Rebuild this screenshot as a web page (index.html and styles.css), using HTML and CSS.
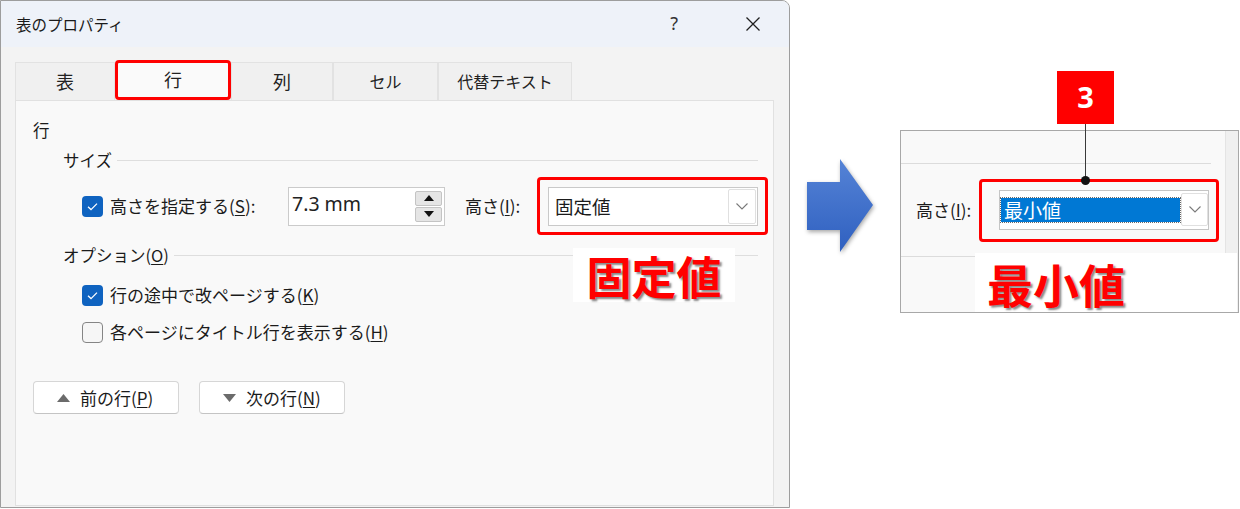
FILE: index.html
```html
<!DOCTYPE html>
<html lang="ja">
<head>
<meta charset="utf-8">
<title>表のプロパティ</title>
<link rel="stylesheet" href="styles.css">
</head>
<body>
<div class="page">
  <div class="dialog">
    <div class="titlebar">
      <span class="title">表のプロパティ</span>
      <span class="help">?</span>
      <span class="close"><svg width="16" height="16" viewBox="0 0 16 16"><path d="M1.5 1.5 L14.5 14.5 M14.5 1.5 L1.5 14.5" stroke="#1f1f1f" stroke-width="1.3" fill="none"/></svg></span>
    </div>
    <div class="body">
      <div class="tabs">
        <div class="tab t1">表</div>
        <div class="tab t2 active">行</div>
        <div class="tab t3">列</div>
        <div class="tab t4">セル</div>
        <div class="tab t5">代替テキスト</div>
      </div>
      <div class="panel">
        <div class="sec">行</div>
        <div class="group"><span class="gname">サイズ</span><i class="rule"></i></div>
        <div class="size-row">
          <span class="cb on"><svg width="21" height="21" viewBox="0 0 21 21"><path d="M6 10.8 L9 13.6 L15 7.6" stroke="#fff" stroke-width="1.3" fill="none"/></svg></span>
          <span class="lbl size-lbl">高さを指定する(<u>S</u>):</span>
          <div class="spin">
            <span class="spin-val">7.3 mm</span>
            <div class="spin-btns">
              <span class="sb"><svg width="10" height="6" viewBox="0 0 10 6"><path d="M0 6 L5 0 L10 6 Z" fill="#111"/></svg></span>
              <span class="sb"><svg width="10" height="6" viewBox="0 0 10 6"><path d="M0 0 L10 0 L5 6 Z" fill="#111"/></svg></span>
            </div>
          </div>
          <span class="lbl h-lbl">高さ(<u>I</u>):</span>
          <div class="redbox">
            <div class="select">
              <span class="sel-val">固定値</span>
              <span class="dd"><svg width="12" height="7" viewBox="0 0 12 7"><path d="M0.5 0.5 L6 6 L11.5 0.5" stroke="#7a7a7a" stroke-width="1.1" fill="none"/></svg></span>
            </div>
          </div>
        </div>
        <div class="group g2"><span class="gname">オプション(<u>O</u>)</span><i class="rule"></i></div>
        <div class="opt o1">
          <span class="cb on"><svg width="21" height="21" viewBox="0 0 21 21"><path d="M6 10.8 L9 13.6 L15 7.6" stroke="#fff" stroke-width="1.3" fill="none"/></svg></span>
          <span class="lbl">行の途中で改ページする(<u>K</u>)</span>
        </div>
        <div class="opt o2">
          <span class="cb off"></span>
          <span class="lbl">各ページにタイトル行を表示する(<u>H</u>)</span>
        </div>
        <div class="navs">
          <button class="nav"><svg width="13" height="8" viewBox="0 0 13 8"><path d="M0 8 L6.5 0 L13 8 Z" fill="#6b6b6b"/></svg><span>前の行(<u>P</u>)</span></button>
          <button class="nav"><svg width="13" height="8" viewBox="0 0 13 8"><path d="M0 0 L13 0 L6.5 8 Z" fill="#6b6b6b"/></svg><span>次の行(<u>N</u>)</span></button>
        </div>
        <div class="note n1">固定値</div>
      </div>
    </div>
  </div>
  <div class="right">
    <svg class="arrow" width="80" height="100" viewBox="0 0 80 100">
      <defs>
        <linearGradient id="ag" x1="0" y1="0" x2="0" y2="1">
          <stop offset="0" stop-color="#5583d6"/>
          <stop offset="1" stop-color="#2f60c0"/>
        </linearGradient>
      </defs>
      <path d="M7 27 L40 27 L40 4 L73 50 L40 97 L40 75 L7 75 Z" fill="url(#ag)"/>
    </svg>
    <div class="zoomwrap">
      <div class="badge">3</div>
      <div class="zoombox">
        <div class="zmain">
          <div class="ztop"></div>
          <div class="zrow">
            <span class="zlbl">高さ(<u>I</u>):</span>
            <div class="zred">
              <div class="zsel">
                <span class="zhl">最小値</span>
                <span class="zdd"><svg width="12" height="7" viewBox="0 0 12 7"><path d="M0.5 0.5 L6 6 L11.5 0.5" stroke="#7a7a7a" stroke-width="1.1" fill="none"/></svg></span>
              </div>
            </div>
          </div>
          <div class="zbottom"></div>
        </div>
        <div class="zstrip"></div>
        <div class="note n2">最小値</div>
      </div>
      <i class="leader"></i>
      <i class="dot"></i>
    </div>
  </div>
</div>
</body>
</html>
```

FILE: styles.css
```css
* { box-sizing: border-box; }

body {
  margin: 0;
  width: 1240px;
  height: 509px;
  overflow: hidden;
  background: #ffffff;
  font-family: "Noto Sans CJK JP", "Noto Sans", sans-serif;
  color: #1b1b1b;
  line-height: 1.2;
}

u { text-decoration-thickness: 1px; text-underline-offset: 2px; }

.page {
  display: flex;
  height: 509px;
}

/* ---------- dialog ---------- */
.dialog {
  width: 790px;
  height: 508px;
  flex: none;
  border: 1px solid #9d9d9d;
  border-top-right-radius: 8px;
  background: #f3f3f3;
  display: flex;
  flex-direction: column;
  overflow: hidden;
}

.titlebar {
  height: 46px;
  flex: none;
  background: #eef2f9;
  display: flex;
  align-items: center;
  padding-left: 15px;
}

.title { font-size: 15.5px; color: #1a1a1a; }

.help {
  margin-left: auto;
  font-family: "Noto Sans", sans-serif;
  font-size: 18px;
  color: #333;
  margin-right: 52px;
}

.close {
  width: 46px;
  display: flex;
  justify-content: center;
  margin-right: 13px;
}

.body {
  flex: 1;
  display: flex;
  flex-direction: column;
  padding: 13px 14px 1px 14px;
}

.tabs {
  display: flex;
  align-items: flex-end;
  height: 40px;
  flex: none;
}

.tab {
  height: 38px;
  flex: none;
  background: #f0f0f0;
  border: 1px solid #e2e2e2;
  border-bottom: none;
  display: flex;
  align-items: center;
  justify-content: center;
  font-size: 17px;
  color: #222;
}
.t1 { width: 100px; font-size: 18px; }
.t2 { width: 116px; }
.t3 { width: 102px; font-size: 18px; }
.t4 { width: 105px; font-size: 16px; }
.t5 { width: 134px; font-size: 16px; }

.tab.active {
  height: 40px;
  background: #fafafa;
  border: 3px solid #ff0000;
  border-radius: 4px;
  font-size: 18px;
}

.panel {
  position: relative;
  flex: 1;
  width: 759px;
  background: #f9f9f9;
  border: 1px solid #e1e1e1;
  padding: 19px 15px 0 17px;
}

.sec { font-size: 16.5px; height: 20px; line-height: 20px; }

.group {
  display: flex;
  align-items: center;
  margin: 10px 0 0 30px;
  height: 20px;
  font-size: 16.5px;
}
.gname { line-height: 20px; }
.rule {
  flex: 1;
  height: 1px;
  background: #dedede;
  margin-left: 5px;
}
.g2 { margin-top: 10px; }

.lbl { font-size: 17px; color: #1b1b1b; flex: none; }

.size-row {
  display: flex;
  align-items: center;
  margin: 7px 0 0 49px;
  height: 58px;
}

.cb {
  width: 21px;
  height: 21px;
  border-radius: 4px;
  flex: none;
  display: block;
}
.cb.on { background: #0f63c0; }
.cb.on svg { display: block; }
.cb.off { background: #f6f6f6; border: 1px solid #858585; }

.size-lbl { margin-left: 7px; width: 153px; }

.spin {
  margin-left: 25px;
  flex: none;
  width: 157px;
  height: 39px;
  background: #fff;
  border: 1px solid #cbcbcb;
  display: flex;
  align-items: center;
}
.spin-val {
  font-family: "Noto Sans", sans-serif;
  font-size: 19.5px;
  padding-left: 3px;
  flex: 1;
  color: #222;
  position: relative;
  top: -2px;
}
.spin-btns {
  display: flex;
  flex-direction: column;
  gap: 1px;
  margin-right: 2px;
}
.sb {
  width: 27px;
  height: 15px;
  background: #e5e5e5;
  border: 1px solid #c4c4c4;
  border-radius: 2px;
  display: flex;
  align-items: center;
  justify-content: center;
}

.h-lbl { margin-left: 20px; width: 63px; }

.redbox {
  flex: none;
  margin-left: 9px;
  border: 3px solid #ff0000;
  border-radius: 4px;
  padding: 7px 7px 6px 8px;
}
.select {
  width: 210px;
  height: 39px;
  background: #fff;
  border: 1px solid #c9c9c9;
  display: flex;
  align-items: center;
}
.sel-val { flex: 1; font-size: 18.5px; padding-left: 6px; color: #1b1b1b; }
.dd {
  width: 28px;
  height: 35px;
  margin-right: 1px;
  border: 1px solid #e0e0e0;
  border-radius: 2px;
  background: #fff;
  display: flex;
  align-items: center;
  justify-content: center;
}

.opt {
  display: flex;
  align-items: center;
  margin-left: 49px;
  height: 21px;
  gap: 7px;
}
.o1 { margin-top: 20px; }
.o2 { margin-top: 16px; }

.navs {
  display: flex;
  gap: 20px;
  margin-top: 38px;
}
.nav {
  width: 146px;
  height: 33px;
  background: #fff;
  border: 1px solid #d6d6d6;
  border-bottom-color: #c4c4c4;
  border-radius: 4px;
  display: flex;
  align-items: center;
  padding: 0 0 0 23px;
  gap: 10px;
  font-family: "Noto Sans CJK JP", sans-serif;
  font-size: 17px;
  color: #1b1b1b;
}

.note {
  position: absolute;
  background: #ffffff;
  color: #ff0000;
  font-weight: 700;
  font-size: 45px;
  line-height: 1;
  display: flex;
  align-items: center;
  justify-content: center;
  text-shadow: 2px 2px 2px rgba(40, 40, 40, 0.55);
}
.n1 {
  left: 557px;
  top: 147px;
  width: 162px;
  height: 54px;
}

/* ---------- right side ---------- */
.right {
  display: flex;
  align-items: flex-start;
  width: 450px;
}

.arrow {
  margin: 155px 0 0 10px;
  flex: none;
  filter: drop-shadow(1px 2px 2px rgba(0, 0, 0, 0.35));
}

.zoomwrap {
  position: relative;
  margin: 71px 0 0 20px;
  width: 339px;
}

.badge {
  margin-left: 157px;
  width: 57px;
  height: 53px;
  background: #ff0000;
  color: #fff;
  font-family: "Noto Sans", sans-serif;
  font-weight: 700;
  font-size: 29px;
  display: flex;
  align-items: center;
  justify-content: center;
}

.zoombox {
  position: relative;
  margin-top: 6px;
  width: 339px;
  height: 183px;
  border: 1px solid #a8a8a8;
  display: flex;
  background: #f9f9f9;
}
.zmain { flex: 1; display: flex; flex-direction: column; }
.ztop { height: 33px; border-bottom: 1px solid #dcdcdc; margin-right: 14px; flex: none; }
.zrow { height: 92px; display: flex; align-items: center; flex: none; }
.zlbl { margin-left: 15px; width: 63px; font-size: 17px; flex: none; }
.zred {
  flex: none;
  border: 3px solid #ff0000;
  border-radius: 4px;
  width: 240px;
  height: 63px;
  padding: 8px 0 0 17px;
}
.zsel {
  width: 210px;
  height: 40px;
  background: #fff;
  border: 1px solid #c5c5c5;
  display: flex;
  align-items: center;
  padding-left: 1px;
}
.zhl {
  width: 179px;
  height: 24px;
  background: #0078d4;
  color: #fff;
  font-size: 19px;
  line-height: 24px;
  padding-left: 3px;
  outline: 1px dotted #6a6a6a;
}
.zdd {
  width: 27px;
  height: 33px;
  margin-left: 1px;
  border: 1px solid #e0e0e0;
  border-radius: 2px;
  background: #fff;
  display: flex;
  align-items: center;
  justify-content: center;
}
.zbottom { flex: 1; border-top: 1px solid #dcdcdc; }
.zstrip { width: 13px; background: #f0f0f0; border-left: 1px solid #e4e4e4; }

.n2 {
  left: 74px;
  top: 122px;
  width: 262px;
  height: 59px;
  justify-content: flex-start;
  padding-left: 12px;
  font-size: 46px;
}

.leader {
  position: absolute;
  left: 185px;
  top: 53px;
  width: 1px;
  height: 56px;
  background: #3a3a3a;
}
.dot {
  position: absolute;
  left: 181px;
  top: 105px;
  width: 9px;
  height: 9px;
  border-radius: 50%;
  background: #111;
}
```
